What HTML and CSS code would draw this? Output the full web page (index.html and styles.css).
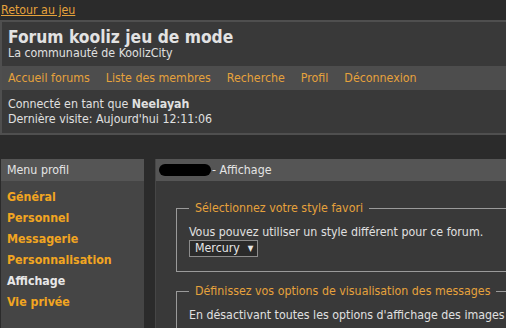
FILE: index.html
```html
<!DOCTYPE html>
<html lang="fr">
<head>
    <meta charset="UTF-8">
    <title>Forum kooliz jeu de mode - Affichage</title>
    <link rel="stylesheet" href="styles.css">
</head>
<body>
    <div class="page">
        <a class="back-link" href="#">Retour au jeu</a>

        <header class="forum-header">
            <div class="brand">
                <h1 class="brand-title">Forum kooliz jeu de mode</h1>
                <p class="brand-sub">La communauté de KoolizCity</p>
            </div>
            <nav class="main-nav">
                <a href="#">Accueil forums</a>
                <a href="#">Liste des membres</a>
                <a href="#">Recherche</a>
                <a href="#">Profil</a>
                <a href="#">Déconnexion</a>
            </nav>
            <div class="user-info">
                <p>Connecté en tant que <strong>Neelayah</strong></p>
                <p>Dernière visite: Aujourd'hui 12:11:06</p>
            </div>
        </header>

        <div class="layout">
            <aside class="side-menu">
                <div class="box-title">Menu profil</div>
                <ul class="side-links">
                    <li><a href="#">Général</a></li>
                    <li><a href="#">Personnel</a></li>
                    <li><a href="#">Messagerie</a></li>
                    <li><a href="#">Personnalisation</a></li>
                    <li class="current">Affichage</li>
                    <li><a href="#">Vie privée</a></li>
                </ul>
            </aside>

            <section class="panel">
                <div class="box-title"><span class="redacted"></span>- Affichage</div>
                <div class="panel-body">
                    <fieldset class="option-group">
                        <legend>Sélectionnez votre style favori</legend>
                        <p>Vous pouvez utiliser un style différent pour ce forum.</p>
                        <span class="fake-select">Mercury <span class="arrow">▼</span></span>
                    </fieldset>

                    <fieldset class="option-group">
                        <legend>Définissez vos options de visualisation des messages</legend>
                        <p>En désactivant toutes les options d'affichage des images</p>
                    </fieldset>
                </div>
            </section>
        </div>
    </div>
</body>
</html>
```

FILE: styles.css
```css
:root {
    --bg: #2b2b2b;
    --box: #393939;
    --bar: #4d4d4d;
    --title-bar: #555555;
    --side: #454545;
    --orange: #e6a23c;
    --orange-bold: #f2a521;
    --text: #e0e0e0;
}

* {
    margin: 0;
    padding: 0;
    box-sizing: border-box;
}

body {
    background-color: var(--bg);
    color: var(--text);
    font-family: "DejaVu Sans Condensed", "DejaVu Sans", sans-serif;
    font-stretch: semi-condensed;
    font-size: 12.3px;
    overflow: hidden;
}

a {
    color: var(--orange);
    text-decoration: none;
}

.page {
    width: 640px;
}

.back-link {
    display: block;
    padding: 2px 1px 2px;
    line-height: 16px;
    text-decoration: underline;
}

.forum-header {
    background-color: var(--box);
    border: 2px solid #4f4f4f;
}

.brand {
    padding: 6px 6px 6px;
}

.brand-title {
    font-size: 17.3px;
    line-height: 19px;
    font-weight: bold;
    color: #e2e2e2;
}

.brand-sub {
    line-height: 13px;
}

.main-nav {
    display: flex;
    gap: 16px;
    padding: 0 6px;
    background-color: var(--bar);
    line-height: 24px;
}

.user-info {
    padding: 7px 6px 6px;
    line-height: 15px;
}

.layout {
    display: flex;
    gap: 11px;
    margin-top: 24px;
    padding-left: 1px;
}

.box-title {
    background-color: var(--title-bar);
    line-height: 22px;
    padding: 0 6px;
    color: #e4e4e4;
}

.side-menu {
    width: 143px;
    flex-shrink: 0;
    background-color: var(--side);
}

.side-links {
    list-style: none;
    padding: 6px 6px 6px;
    font-weight: bold;
    line-height: 21px;
}

.side-links a {
    color: var(--orange-bold);
}

.side-links .current {
    color: #e8e8e8;
}

.panel {
    flex: 1;
    background-color: var(--box);
    border-left: 1px solid #464646;
    min-height: 200px;
}

.panel .box-title {
    padding-left: 3px;
    display: flex;
    align-items: center;
}

.redacted {
    display: inline-block;
    width: 52px;
    height: 12px;
    background-color: #000;
    border-radius: 6px;
    margin-right: 1px;
}

.panel-body {
    padding: 19px 20px 20px;
}

.option-group {
    border: 1px solid #9a9a9a;
    padding: 9px 12px 14px;
    line-height: 15px;
}

.option-group + .option-group {
    margin-top: 11px;
}

.option-group legend {
    padding: 0 6px;
    line-height: 16px;
    color: var(--orange);
}

.fake-select {
    display: inline-flex;
    align-items: center;
    gap: 8px;
    height: 17px;
    width: 69px;
    padding: 0 5px;
    border: 1px solid #8c8c8c;
    background-color: #2a2a2a;
    color: #e6e6e6;
}

.fake-select .arrow {
    font-size: 8px;
}
```
